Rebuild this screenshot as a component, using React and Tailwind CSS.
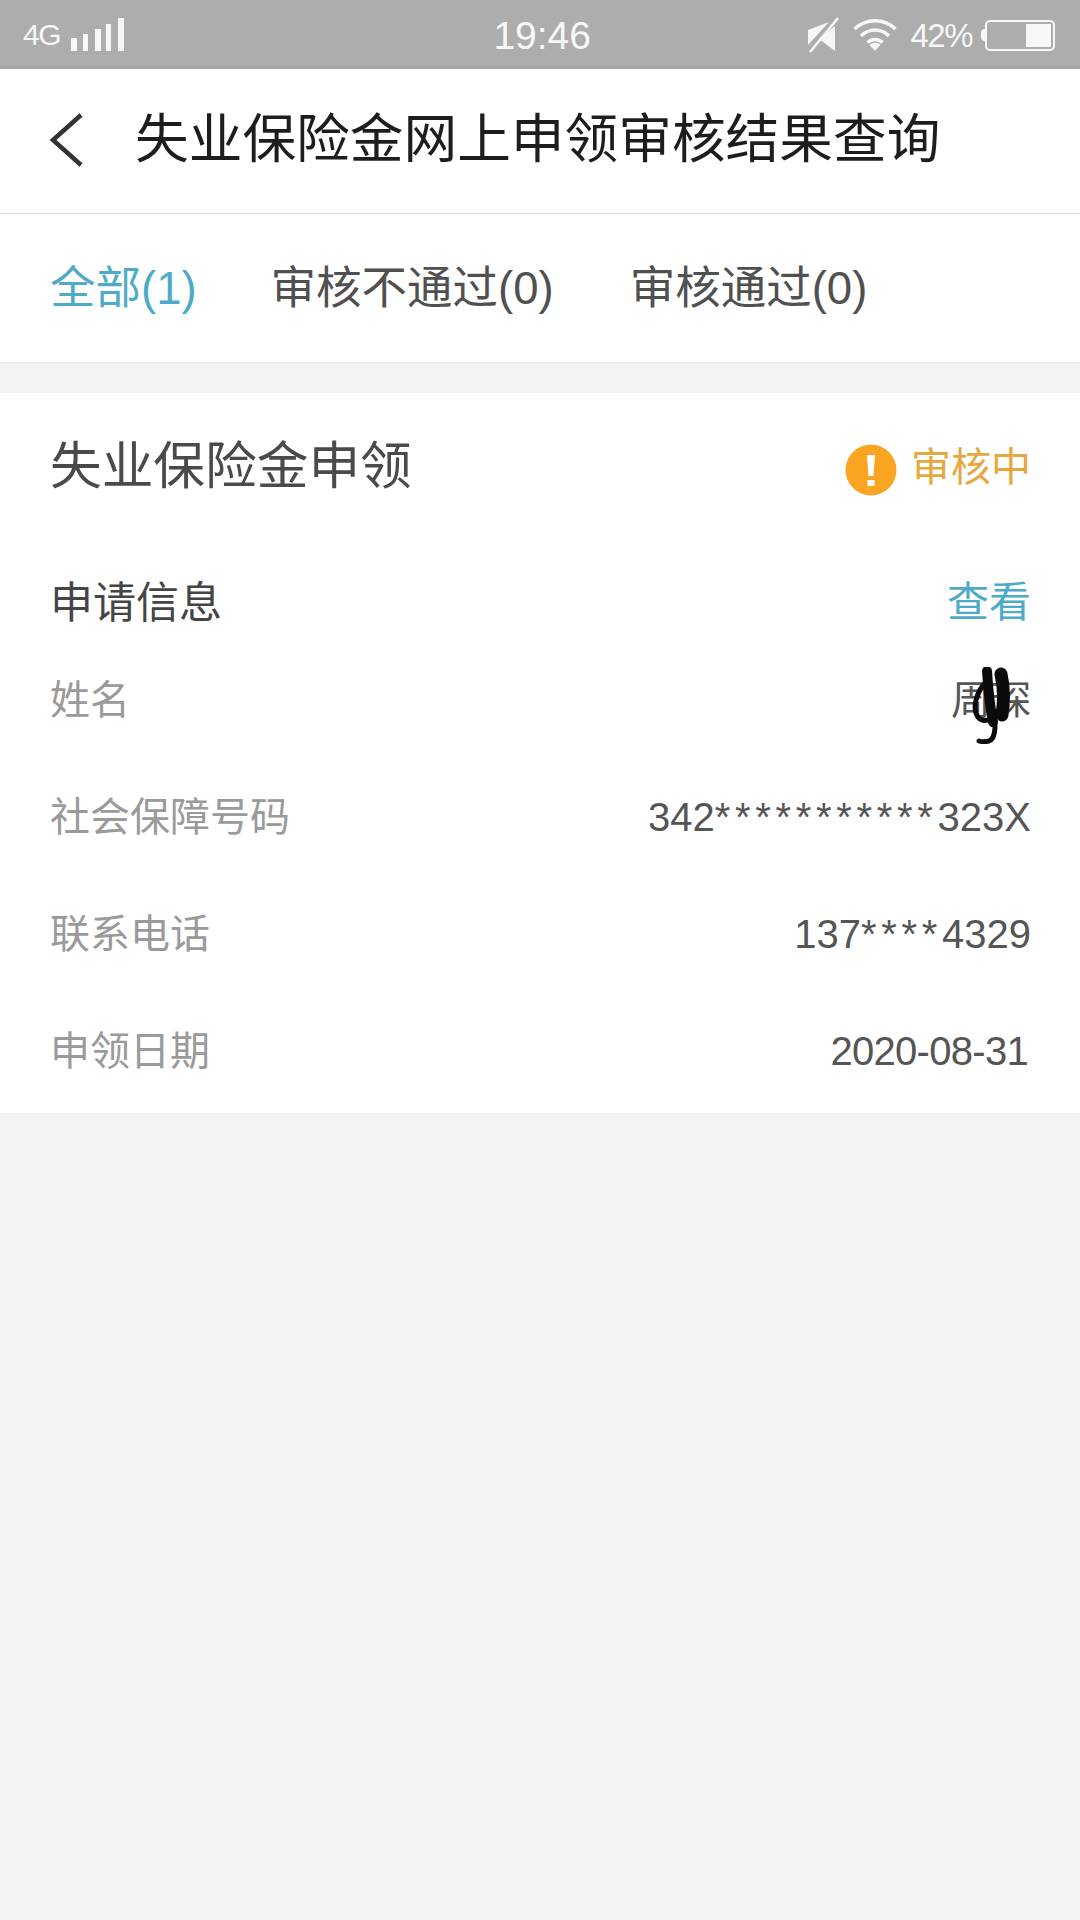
const CJK = { fontFamily: '"Liberation Sans","Noto Sans CJK SC",sans-serif' };

function Stars({ children }) {
  return <span className="tracking-[4.700px]">{children}</span>;
}

function Row({ label, value, children, labelCls = "" }) {
  return (
    <div className="relative flex items-center justify-between h-[117px] text-[40px] leading-none">
      <span className={`text-[#9a9a9a] ${labelCls}`}>{label}</span>
      <span className="text-[#555555]">{value}</span>
      {children}
    </div>
  );
}

export default function App() {
  return (
    <div style={CJK} className="w-[1080px] h-[1920px] bg-[#f3f3f3] flex flex-col overflow-hidden">
      <div className="h-[69px] bg-[#adadad] border-b-[3px] border-[#a5a5a5] flex items-center justify-between text-[#f7f7f7] pl-[23px] pr-[24px] pt-[4px]">
        <div className="flex items-end gap-[11px] w-[300px]">
          <span className="text-[30px] leading-[30px] tracking-[-1.500px]">4G</span>
          <svg width="54" height="33" viewBox="0 0 54 33" fill="#f7f7f7" className="-mt-[4px] mb-[-1px]">
            <rect x="0" y="20" width="6" height="13" />
            <rect x="12" y="16" width="5" height="17" />
            <rect x="24" y="11" width="6" height="22" />
            <rect x="35" y="6" width="5" height="27" />
            <rect x="47" y="0" width="6" height="33" />
          </svg>
        </div>
        <span className="text-[39px] leading-none -ml-[46px] mt-[1px]">19:46</span>
        <div className="flex items-center">
          <svg width="32" height="36" viewBox="0 0 32 36" className="mr-[14px]">
            <path d="M1 13 22 5 1 28z" fill="#f7f7f7" />
            <path d="M28 9v25L12 22z" fill="#f7f7f7" />
            <path d="M3 35 31 1" stroke="#f7f7f7" strokeWidth="2.500" />
          </svg>
          <svg width="44" height="34" viewBox="0 0 44 34" fill="none" stroke="#f7f7f7" strokeWidth="3.500" className="mr-[13px]">
            <path d="M1.500 11C13 0 31 0 42.500 11" />
            <path d="M8 18C16 10 28 10 36 18" />
            <path d="M14.500 24.500C19 20.500 25 20.500 29.500 24.500" />
            <path d="M16.500 27 22 33l5.500-6c-3-3-8-3-11 0z" fill="#f7f7f7" stroke="none" />
          </svg>
          <span className="text-[33px] leading-none tracking-[-1.500px]">42%</span>
          <div className="w-[4px] h-[12px] ml-[9px] bg-[#f7f7f7] rounded-l-full" />
          <div className="w-[70px] h-[31px] border-[2px] border-[#f7f7f7] rounded-[5px] flex justify-end p-[2px] mr-[1px]">
            <div className="w-[25px] h-full bg-[#f7f7f7]" />
          </div>
        </div>
      </div>

      <div className="h-[145px] bg-white border-b-[1px] border-[#cfe8cf] flex items-center pl-[49px] pb-[3px]">
        <svg width="34" height="54" viewBox="0 0 34 54" fill="none" stroke="#333333" strokeWidth="4.500">
          <path d="M32 2 4 27l28 25" />
        </svg>
        <h1 className="ml-[52px] text-[53.700px] leading-none font-normal text-[#1d1d1d]">失业保险金网上申领审核结果查询</h1>
      </div>

      <div className="h-[150px] bg-white border-b-[2px] border-[#ebebeb] flex items-center text-[45.500px] leading-none text-[#505050] pl-[50px] pt-[2px]">
        <span className="text-[#4eabc8]">全部(1)</span>
        <span className="ml-[74px]">审核不通过(0)</span>
        <span className="ml-[76px]">审核通过(0)</span>
      </div>

      <div className="mt-[29px] h-[720px] bg-white pl-[50px] pr-[49px] flex flex-col">
        <div className="flex items-center justify-between h-[146px] pt-[2px]">
          <span className="text-[51.700px] leading-none text-[#4a4a4a]">失业保险金申领</span>
          <div className="flex items-center">
            <svg width="52" height="52" viewBox="0 0 52 52" className="mt-[5px]">
              <circle cx="26" cy="26" r="25.500" fill="#f9a521" />
              <path d="M22 11h8l-1.500 21h-5z" fill="#ffffff" />
              <rect x="22.500" y="36" width="7" height="6" fill="#ffffff" />
            </svg>
            <span className="ml-[14px] text-[40px] leading-none text-[#e6a83e]">审核中</span>
          </div>
        </div>
        <div className="flex items-center justify-between h-[102px] pt-[26px]">
          <span className="text-[43px] leading-none text-[#454545]">申请信息</span>
          <span className="text-[42px] leading-none text-[#4eabc8]">查看</span>
        </div>
        <div>
          <Row label="姓名" value="周琛">
            <svg width="40" height="77" viewBox="0 0 40 77" fill="none" stroke="#0b0b0b" strokeLinecap="round" className="absolute right-[19px] top-[26px]">
              <path d="M15 4C16 20 18 40 21 55" strokeWidth="10" />
              <path d="M29 7C32 20 32 35 30 48" strokeWidth="13" />
              <path d="M13 16C4 26 0 42 6 50 9 54 14 54 19 52" strokeWidth="5" />
              <path d="M22 50C24 60 23 72 17 74 13 75 10 75 7 74" strokeWidth="5" />
            </svg>
          </Row>
          <Row label="社会保障号码" value={<>342<Stars>***********</Stars>323X</>} />
          <Row label="联系电话" value={<>137<Stars>****</Stars>4329</>} />
          <Row label="申领日期" value={<span className="tracking-[-0.700px] mr-[3px]">2020-08-31</span>} />
        </div>
      </div>
    </div>
  );
}
